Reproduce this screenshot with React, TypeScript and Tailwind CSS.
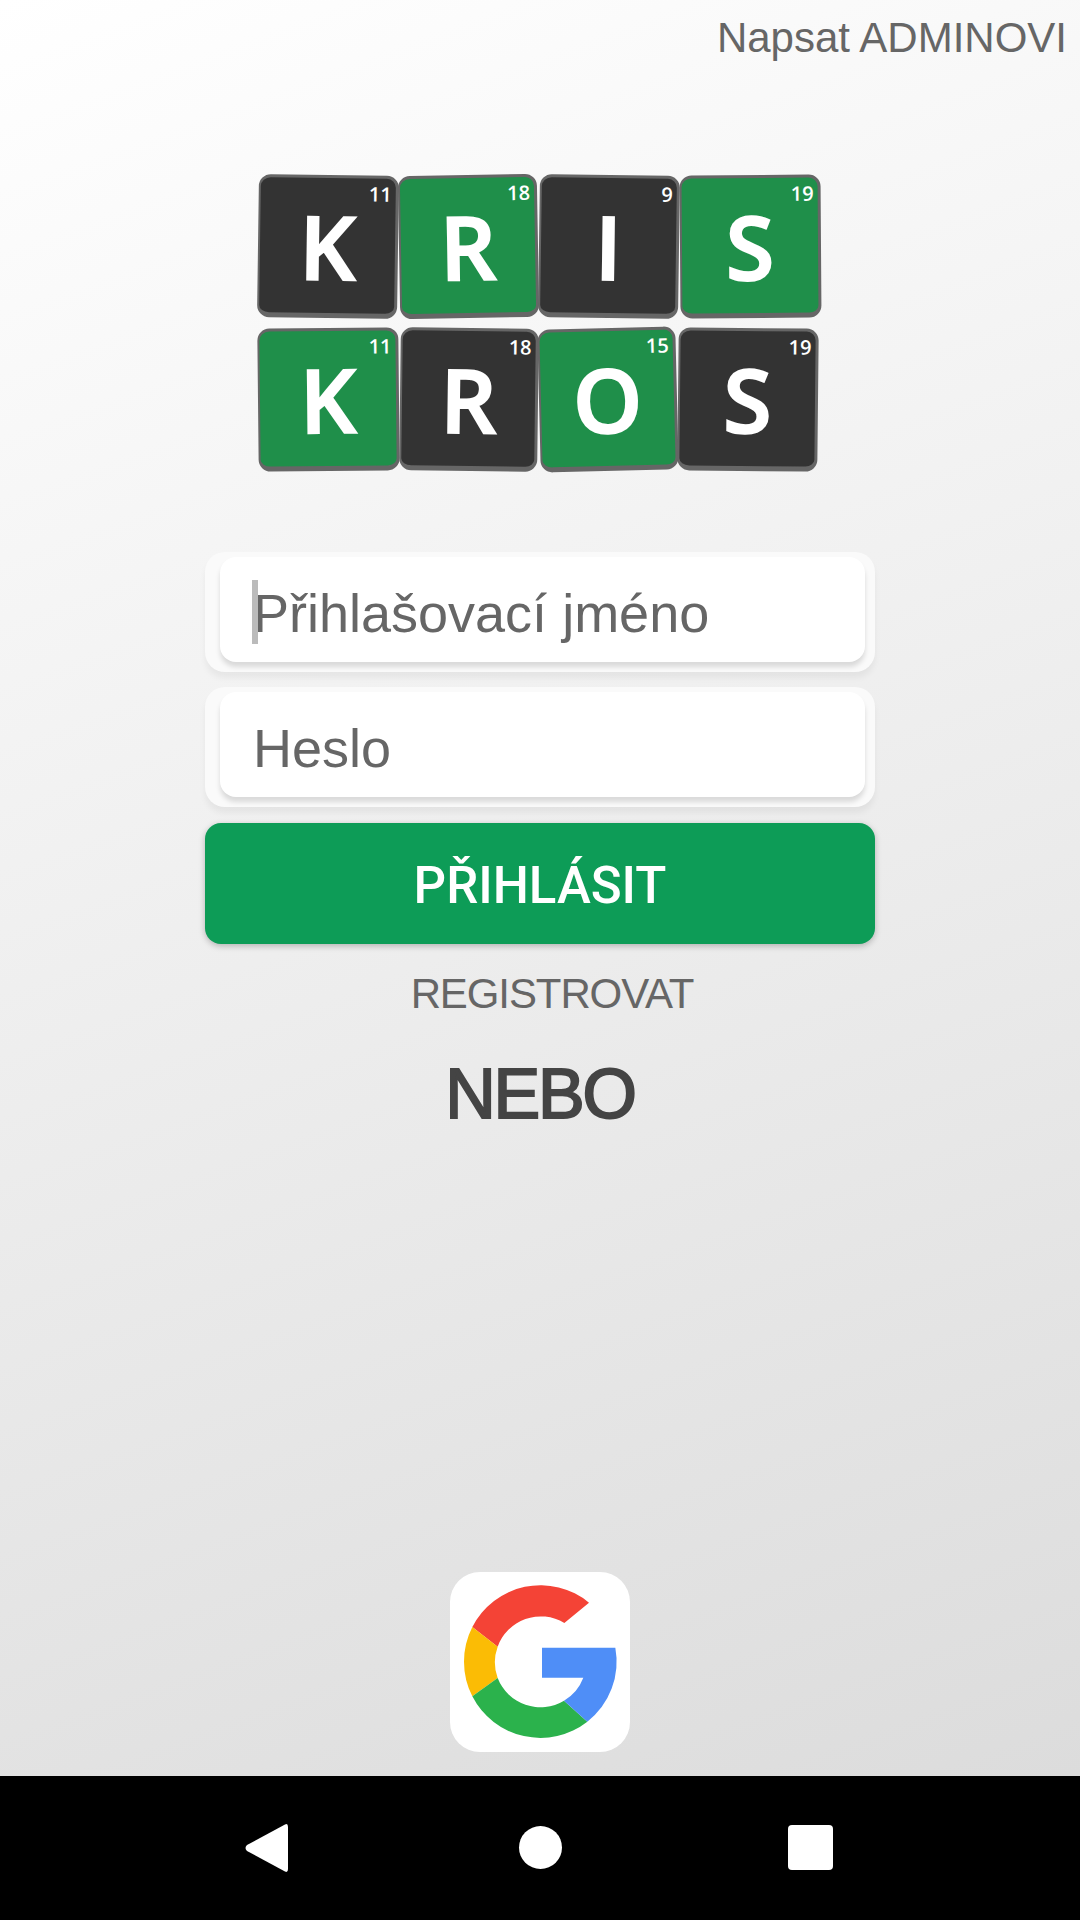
const row1 = [
  { letter: 'K', num: '11', cls: 'w-[140px] bg-[#333333] rotate-[0.8deg]' },
  { letter: 'R', num: '18', cls: 'w-[139px] bg-[#1f8f4a] -rotate-[1deg]' },
  { letter: 'I', num: '9', cls: 'w-[140px] bg-[#333333] rotate-[0.8deg]' },
  { letter: 'S', num: '19', cls: 'w-[141px] bg-[#1f8f4a] -rotate-[0.4deg]' },
];

const row2 = [
  { letter: 'K', num: '11', cls: 'w-[141px] bg-[#1f8f4a] -rotate-[0.6deg]' },
  { letter: 'R', num: '18', cls: 'w-[138px] bg-[#333333] rotate-[0.7deg]' },
  { letter: 'O', num: '15', cls: 'w-[138px] bg-[#1f8f4a] -rotate-[1.4deg]' },
  { letter: 'S', num: '19', cls: 'w-[140px] bg-[#333333] rotate-[0.6deg]' },
];

function Tile({ letter, num, cls }: { letter: string; num: string; cls: string }) {
  return (
    <div
      className={`relative flex h-[143px] items-center justify-center rounded-[12px] border-[3px] border-b-[5px] border-l-2 border-[#666666] text-white ${cls}`}
    >
      <span className="font-['Open_Sans',sans-serif] text-[88px] font-semibold leading-none [-webkit-text-stroke:2px_white]">
        {letter}
      </span>
      <span className="absolute right-[4px] top-[4px] font-['Open_Sans',sans-serif] text-[20px] font-semibold leading-[24px]">
        {num}
      </span>
    </div>
  );
}

function Field({ placeholder, caret }: { placeholder: string; caret?: boolean }) {
  return (
    <div className="rounded-[20px] bg-[#fafafa] pb-[10px] pl-[15px] pr-[10px] pt-[5px] shadow-[0_6px_6px_rgba(0,0,0,0.05)]">
      <div className="relative h-[105px] rounded-[16px] bg-white shadow-[0_5px_5px_rgba(0,0,0,0.13)]">
        <input
          placeholder={placeholder}
          readOnly
          className="h-full w-full bg-transparent pl-[33px] pt-[6px] font-['Liberation_Sans',sans-serif] text-[54px] text-[#666666] outline-none placeholder:text-[#666666]"
        />
        {caret && <span className="absolute left-[32px] top-[23px] h-[64px] w-[6px] bg-[#bbbbbb]" />}
      </div>
    </div>
  );
}

function GoogleLogo() {
  return (
    <svg viewBox="60 65 540 540" className="h-[180px] w-[180px]">
      <path d="M477 157A229 229 0 0 0 127 230L203 289A137 137 0 0 1 403 218Z" fill="#f44336" />
      <path d="M127 230A229 229 0 0 0 127 438L203 383A137 137 0 0 1 203 289Z" fill="#fbbc05" />
      <path d="M127 438A229 229 0 0 0 472 514L402 451A137 137 0 0 1 203 383Z" fill="#2bb24c" />
      <path d="M472 514A229 229 0 0 0 556 292L336 292L336 382L460 382A137 137 0 0 1 402 451Z" fill="#4f8ef7" />
    </svg>
  );
}

export default function App() {
  return (
    <div className="flex h-[1920px] w-[1080px] flex-col overflow-hidden font-['Liberation_Sans',sans-serif]">
      <main className="flex flex-1 flex-col bg-[linear-gradient(160deg,#ffffff_0%,#dcdcdc_100%)]">
        <div className="pr-[13px] pt-[14px] text-right text-[42px] leading-[48px] text-[#666666]">Napsat ADMINOVI</div>

        {/* logo */}
        <div className="mt-[113px] flex flex-col gap-[10px] pl-[258px]">
          <div className="flex gap-[1px]">
            {row1.map((t, i) => (
              <Tile key={i} {...t} />
            ))}
          </div>
          <div className="flex gap-[1px]">
            {row2.map((t, i) => (
              <Tile key={i} {...t} />
            ))}
          </div>
        </div>

        <form className="mx-auto mt-[81px] flex w-[670px] flex-col">
          <div className="flex flex-col gap-[15px]">
            <Field placeholder="Přihlašovací jméno" caret />
            <Field placeholder="Heslo" />
          </div>
          <button
            type="button"
            className="mt-[16px] h-[121px] rounded-[16px] bg-[#0d9c57] pt-[6px] font-['Roboto',sans-serif] text-[51px] font-medium text-white shadow-[0_2px_6px_rgba(0,0,0,0.25)]"
          >
            PŘIHLÁSIT
          </button>
        </form>

        <div className="mt-[26px] pl-[24px] text-center text-[42px] leading-[48px] tracking-[-1.1px] text-[#666666]">
          REGISTROVAT
        </div>
        <div className="mt-[36px] text-center text-[70px] leading-[80px] tracking-[-2.2px] text-[#444444] [-webkit-text-stroke:2px_#444444]">
          NEBO
        </div>

        <div className="mx-auto mb-[24px] mt-auto rounded-[30px] bg-white">
          <GoogleLogo />
        </div>
      </main>

      {/* android nav bar */}
      <nav className="flex h-[144px] items-center bg-black pb-[1px] pl-[245px]">
        <svg viewBox="0 0 43 50" className="h-[50px] w-[43px]">
          <path d="M40 1.5Q43 0 43 4V46Q43 50 40 48.5L2 28Q-1 25 2 22Z" fill="#ffffff" />
        </svg>
        <div className="ml-[231px] h-[43px] w-[43px] rounded-full bg-white" />
        <div className="ml-[226px] h-[45px] w-[45px] rounded-[4px] bg-white" />
      </nav>
    </div>
  );
}
